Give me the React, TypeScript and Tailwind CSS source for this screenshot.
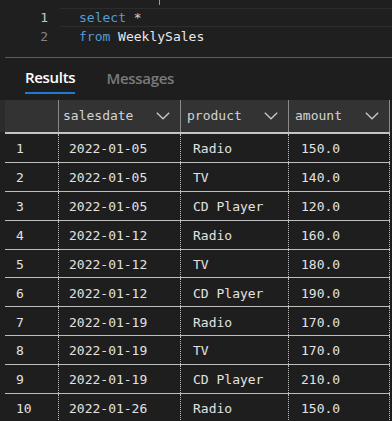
import React from "react";

const rows = [
  ["1", "2022-01-05", "Radio", "150.0"],
  ["2", "2022-01-05", "TV", "140.0"],
  ["3", "2022-01-05", "CD Player", "120.0"],
  ["4", "2022-01-12", "Radio", "160.0"],
  ["5", "2022-01-12", "TV", "180.0"],
  ["6", "2022-01-12", "CD Player", "190.0"],
  ["7", "2022-01-19", "Radio", "170.0"],
  ["8", "2022-01-19", "TV", "170.0"],
  ["9", "2022-01-19", "CD Player", "210.0"],
  ["10", "2022-01-26", "Radio", "150.0"],
];

const mono = "font-['DejaVu_Sans_Mono','Liberation_Mono',monospace]";

function Chevron() {
  return (
    <svg width="14" height="8" viewBox="0 0 14 8" className="shrink-0">
      <path d="M0.8 0.8 L7 6.8 L13.2 0.8" fill="none" stroke="#c8c8c8" strokeWidth="1.3" />
    </svg>
  );
}

function HeaderCell({ label, w, pl }: { label: string; w: string; pl: string }) {
  return (
    <div className={`${w} ${pl} h-full flex items-center justify-between pr-[10px] border-r border-[#8a8a8a]`}>
      <span className="text-[13px] text-[#d4d4d4]">{label}</span>
      <Chevron />
    </div>
  );
}

export default function App() {
  return (
    <div className={`w-[392px] h-[421px] overflow-hidden bg-[#1e1e1e] ${mono}`}>
      {/* Editor */}
      <div className="relative h-[57px] pt-[8px] bg-[#1f1f1f]">
        <div className="absolute left-[159px] top-0 w-px h-[5px] bg-[#9a9a9a]" />
        <div className="absolute left-[60px] right-0 top-[8px] h-[19px] border-y border-[#2c2c2c]" />
        <div className="relative flex h-[19px] items-center text-[13px] leading-[19px]">
          <span className="w-[48px] text-right text-[#c6c6c6]">1</span>
          <span className="ml-[31px] text-[#569cd6]">select</span>
          <span className="ml-[7.8px] text-[#d4d4d4]">*</span>
        </div>
        <div className="relative flex h-[19px] items-center text-[13px] leading-[19px]">
          <span className="w-[48px] text-right text-[#858585]">2</span>
          <span className="ml-[31px] text-[#569cd6]">from</span>
          <span className="ml-[7.8px] text-[#e8e8e8]">WeeklySales</span>
        </div>
      </div>
      {/* separator */}
      <div className="ml-[5px] h-px bg-[#5a5a5a]" />
      {/* Tabs */}
      <div className="h-[42px] flex items-start pl-[25px] font-['Open_Sans','Noto_Sans',sans-serif]">
        <div className="flex flex-col pt-[8px]">
          <span className="text-[15px] font-semibold leading-[22px] text-white tracking-[-0.3px]">Results</span>
          <div className="mt-[4px] h-[2px] bg-[#1f7bd1]" />
        </div>
        <div className="ml-[31px] pt-[8px]">
          <span className="text-[15px] font-semibold leading-[22px] text-[#7a7a7a] tracking-[-0.3px]">Messages</span>
        </div>
      </div>
      {/* Table header */}
      <div className="flex h-[34px]">
        <div className="w-[5px] h-[32px] bg-[#2b2b2b]" />
        <div className="flex h-[34px] border-b-2 border-[#c4c4c4] bg-[#333333]">
          <div className="w-[54px] h-full border-r border-[#8a8a8a]" />
          <HeaderCell label="salesdate" w="w-[122px]" pl="pl-[4px]" />
          <HeaderCell label="product" w="w-[108px]" pl="pl-[6px]" />
          <HeaderCell label="amount" w="w-[101px]" pl="pl-[6px]" />
        </div>
      </div>
      {/* Rows */}
      <div className="ml-[5px]">
        {rows.map((r) => (
          <div key={r[0]} className="flex h-[28.9px] w-[385px] border-b border-[#bdbdbd] text-[13px] text-[#e2e2e2]">
            <div className="w-[54px] h-full flex items-center pt-[2px] pl-[11px] border-r border-dotted border-[#bdbdbd]">{r[0]}</div>
            <div className="w-[122px] h-full flex items-center pt-[2px] pl-[10px] border-r border-dotted border-[#bdbdbd]">{r[1]}</div>
            <div className="w-[108px] h-full flex items-center pt-[2px] pl-[12px] border-r border-dotted border-[#bdbdbd]">{r[2]}</div>
            <div className="w-[101px] h-full flex items-center pt-[2px] pl-[12px] border-r border-dotted border-[#bdbdbd]">{r[3]}</div>
          </div>
        ))}
      </div>
    </div>
  );
}
